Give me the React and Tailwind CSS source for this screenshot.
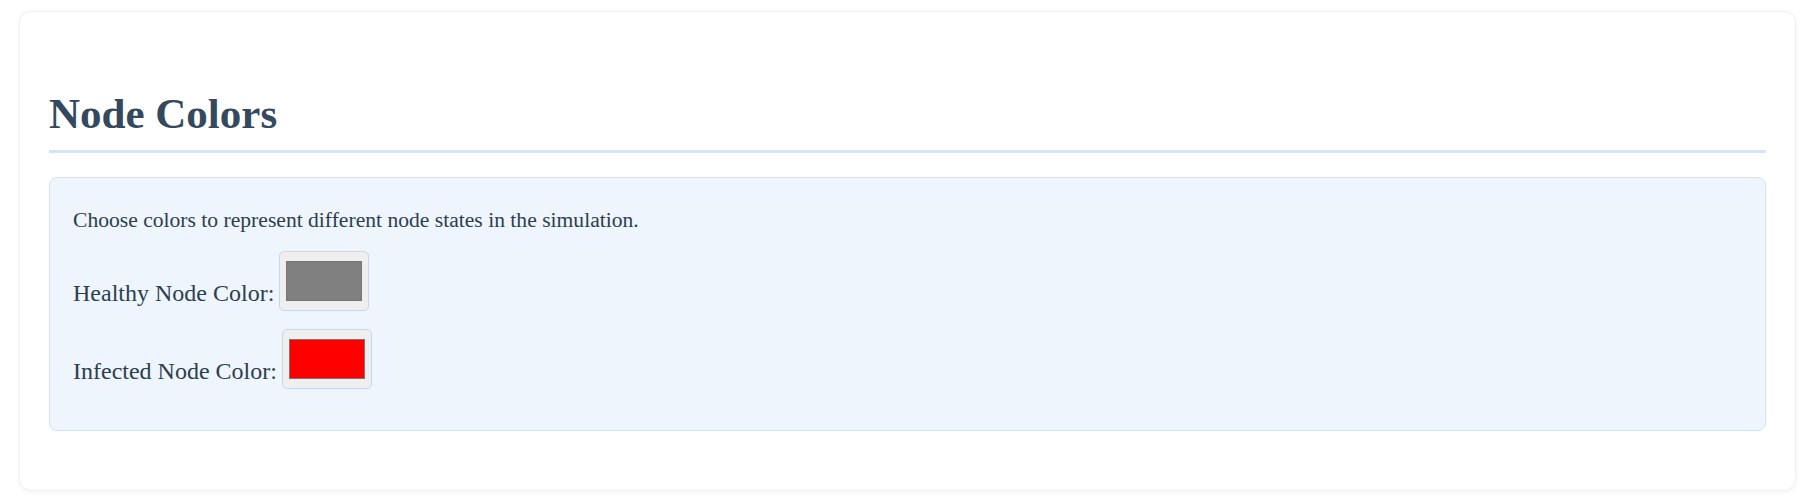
import React from 'react'

const ColorField = ({ label, color }) => (
  <div className="flex items-end">
    <span className="mb-[4px] text-[24px] leading-[28px]">{label}</span>
    <span className="ml-[5px] flex h-[60px] w-[90px] items-center justify-center rounded-[5px] border border-[#c3d8ee] bg-[#efefef]">
      <span
        className="block h-[40px] w-[76px] border border-[#767676]"
        style={{ backgroundColor: color }}
      />
    </span>
  </div>
)

export default function App() {
  return (
    <div
      className="min-h-[504px] bg-white pt-[11px] pl-[19px] pr-[17px]"
      style={{ fontFamily: '"Liberation Serif", "Times New Roman", serif' }}
    >
      <div className="rounded-[12px] border border-[#f1f1f1] bg-white px-[29px] pt-[77px] pb-[59px] shadow-[0_1px_5px_rgba(0,0,0,0.06)]">
        {/* Section title */}
        <h2 className="border-b-[3px] border-[#d6e4f5] pb-[11px] text-[43px] font-bold leading-[50px] text-[#34495e]">
          Node Colors
        </h2>

        {/* Color pickers */}
        <div className="mt-[24px] rounded-[8px] border border-[#d3e3f2] bg-[#eff5fc] px-[23px] pt-[29px] pb-[41px] text-[#2c3e50]">
          <p className="text-[21.6px] leading-[26px]">
            Choose colors to represent different node states in the simulation.
          </p>
          <div className="mt-[18px] flex flex-col gap-[18px]">
            <ColorField label="Healthy Node Color:" color="#808080" />
            <ColorField label="Infected Node Color:" color="#ff0000" />
          </div>
        </div>
      </div>
    </div>
  )
}
